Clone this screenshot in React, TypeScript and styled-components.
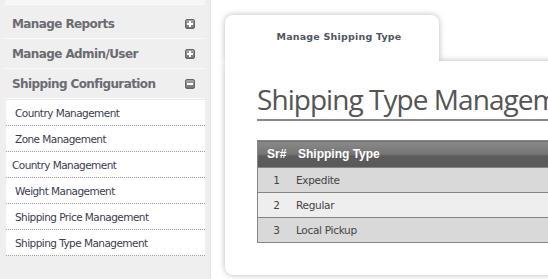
import React from "react";
import styled, { createGlobalStyle } from "styled-components";

const Global = createGlobalStyle`
  html, body { margin: 0; padding: 0; background: #fff; overflow: hidden; }
  body { font-family: "DejaVu Sans", Tahoma, sans-serif; }
`;

const Page = styled.div`
  display: flex;
  width: 548px;
  height: 279px;
  overflow: hidden;
`;

const Sidebar = styled.aside`
  flex: 0 0 211px;
  background: #efefef;
  border-right: 1px solid #e2e2e2;
  padding: 0 5px;
  box-sizing: border-box;
  display: flex;
  flex-direction: column;
`;

const TopCap = styled.div`
  height: 4px;
  border-bottom: 1px solid #fafafa;
  background: #f6f6f6;
  margin-bottom: 4px;
`;

const MenuHeader = styled.div`
  height: 29px;
  border-bottom: 1px solid #fbfbfb;
  display: flex;
  align-items: center;
  justify-content: space-between;
  padding: 0 10px 0 7px;
  font-size: 12px;
  font-weight: bold;
  color: #6b6b70;
  letter-spacing: -0.6px;
`;

const SubMenu = styled.ul`
  list-style: none;
  margin: 0 0 0 1px;
  padding: 0;
  background: #fff;
  border-top: 1px solid #e8e8e8;
`;

const SubItem = styled.li<{ $indent: number }>`
  height: 25px;
  border-bottom: 1px dotted #9a9a9a;
  display: flex;
  align-items: center;
  padding-left: ${(p) => p.$indent}px;
  font-size: 10.5px;
  color: #3c3c50;
  letter-spacing: -0.55px;
`;

const Main = styled.main`
  flex: 1 1 auto;
  padding: 15px 0 0 14px;
  min-width: 0;
`;

const TabRow = styled.div`
  display: flex;
  position: relative;
  z-index: 1;
`;

const Tab = styled.div`
  width: 214px;
  height: 46px;
  background: #fff;
  border-radius: 8px 8px 0 0;
  box-shadow: 0 0 6px rgba(0, 0, 0, 0.28);
  clip-path: inset(-10px -10px 0 -10px);
  display: flex;
  justify-content: center;
  padding: 16px 0 0 14px;
  box-sizing: border-box;
  font-size: 9.5px;
  font-weight: bold;
  color: #4f5660;
  letter-spacing: 0.2px;
`;

const PanelBody = styled.div`
  width: 420px;
  height: 214px;
  background: #fff;
  border-radius: 0 0 0 8px;
  box-shadow: 0 0 6px rgba(0, 0, 0, 0.28);
  padding: 20px 0 0 32px;
  box-sizing: border-box;
`;

const Heading = styled.h1`
  margin: 0;
  font-family: "Open Sans", sans-serif;
  font-weight: 400;
  font-size: 28px;
  line-height: 36px;
  color: #555;
  white-space: nowrap;
  letter-spacing: -0.95px;
  border-bottom: 2px solid #8a8a8a;
  padding-bottom: 2px;
  margin-bottom: 19px;
`;

const Table = styled.table`
  border-collapse: collapse;
  width: 400px;
  border: 1px solid #858585;
  font-family: "DejaVu Sans", Tahoma, sans-serif;
`;

const HeadCell = styled.th<{ $w?: number; $pad: number }>`
  height: 26px;
  padding: 0 0 0 ${(p) => p.$pad}px;
  text-align: left;
  font-family: "Liberation Sans", Arial, sans-serif;
  font-size: 12px;
  font-weight: bold;
  color: #fff;
  width: ${(p) => (p.$w ? `${p.$w}px` : "auto")};
  background: linear-gradient(#8a8a8a 0%, #747474 50%, #5c5c5c 55%, #5a5a5a 100%);
`;

const Row = styled.tr<{ $alt: boolean }>`
  background: ${(p) => (p.$alt ? "#eeeeee" : "#d9d9d9")};
  border-top: 1px solid #858585;
`;

const Cell = styled.td<{ $center?: boolean }>`
  height: 24px;
  padding: 0 0 0 ${(p) => (p.$center ? 4 : 5)}px;
  text-align: ${(p) => (p.$center ? "center" : "left")};
  font-size: 10.5px;
  color: #444;
  letter-spacing: -0.3px;
`;

const ToggleIcon = ({ open }: { open: boolean }) => (
  <svg width="10" height="10" viewBox="0 0 10 10">
    <defs>
      <linearGradient id={open ? "gm" : "gp"} x1="0" y1="0" x2="0" y2="1">
        <stop offset="0" stopColor="#a9a9a9" />
        <stop offset="1" stopColor="#6f6f6f" />
      </linearGradient>
    </defs>
    <rect x="0.5" y="0.5" width="9" height="9" rx="1.5" fill={`url(#${open ? "gm" : "gp"})`} stroke="#666" strokeWidth="1" />
    <rect x="2" y="4" width="6" height="2" fill="#fff" />
    {!open && <rect x="4" y="2" width="2" height="6" fill="#fff" />}
  </svg>
);

const menus = [
  { label: "Manage Reports", open: false },
  { label: "Manage Admin/User", open: false },
  { label: "Shipping Configuration", open: true },
];

const subItems = [
  { label: "Country Management", indent: 9 },
  { label: "Zone Management", indent: 9 },
  { label: "Country Management", indent: 6 },
  { label: "Weight Management", indent: 9 },
  { label: "Shipping Price Management", indent: 9 },
  { label: "Shipping Type Management", indent: 9 },
];

const rows = ["Expedite", "Regular", "Local Pickup"];

export default function App() {
  return (
    <>
      <Global />
      <Page>
        <Sidebar>
          <TopCap />
          {menus.map((m) => (
            <MenuHeader key={m.label}>
              <span>{m.label}</span>
              <ToggleIcon open={m.open} />
            </MenuHeader>
          ))}
          <SubMenu>
            {subItems.map((s, i) => (
              <SubItem key={i} $indent={s.indent}>
                {s.label}
              </SubItem>
            ))}
          </SubMenu>
        </Sidebar>
        <Main>
          <TabRow>
            <Tab>Manage Shipping Type</Tab>
          </TabRow>
          <PanelBody>
            <Heading>Shipping Type Management</Heading>
            <Table>
              <thead>
                <tr>
                  <HeadCell $w={24} $pad={9}>Sr#</HeadCell>
                  <HeadCell $pad={7}>Shipping Type</HeadCell>
                </tr>
              </thead>
              <tbody>
                {rows.map((r, i) => (
                  <Row key={r} $alt={i % 2 === 1}>
                    <Cell $center>{i + 1}</Cell>
                    <Cell>{r}</Cell>
                  </Row>
                ))}
              </tbody>
            </Table>
          </PanelBody>
        </Main>
      </Page>
    </>
  );
}
